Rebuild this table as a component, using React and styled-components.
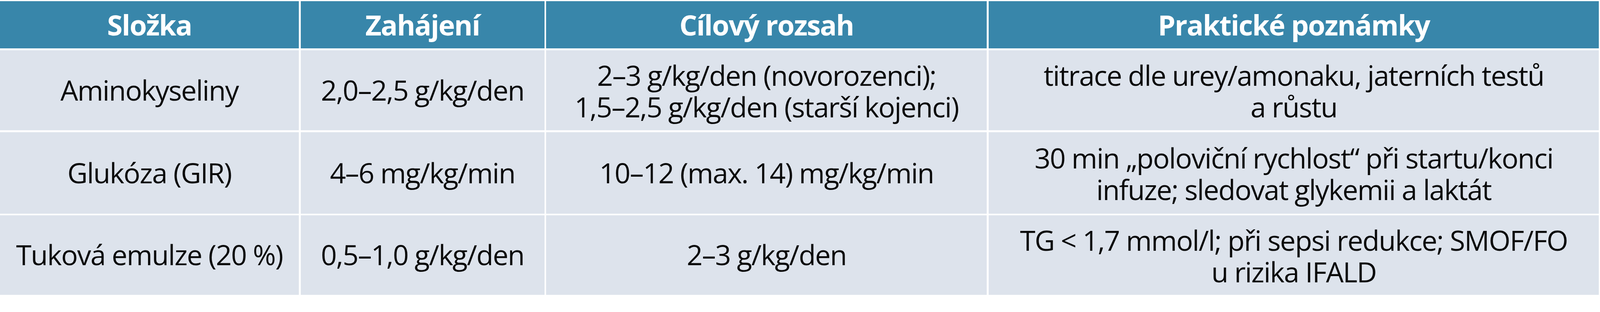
import styled, { createGlobalStyle } from 'styled-components'

// the reference is measured on a 4353px wide frame; sizes are kept in vw so the
// table scales with whatever width the window really has
const u = (px) => `${((px * 100) / 4353).toFixed(4)}vw`

const GlobalStyle = createGlobalStyle`
  html, body {
    margin: 0;
    padding: 0;
    background: #ffffff;
    overflow: hidden;
  }
  body {
    font-family: 'Open Sans', 'Noto Sans', sans-serif;
  }
`

const Table = styled.div`
  display: grid;
  grid-template-columns: ${u(813)} ${u(663)} ${u(1199)} ${u(1660)};
  grid-template-rows: ${u(129)} ${u(218)} ${u(222)} ${u(216)};
  column-gap: ${u(5)};
  row-gap: ${u(5)};
  padding: ${u(3)} ${u(3)} 0 0;
  width: 100vw;
  box-sizing: border-box;
  background: #ffffff;
`

const HeadCell = styled.div`
  display: flex;
  align-items: center;
  justify-content: center;
  background: #3886aa;
  color: #ffffff;
  font-weight: 700;
  font-size: ${u(76)};
  letter-spacing: ${u(-2)};
  white-space: nowrap;
`

const Cell = styled.div`
  display: flex;
  align-items: center;
  justify-content: center;
  text-align: center;
  background: #dde3ec;
  color: #0a0a0a;
  font-size: ${u(76)};
  line-height: ${u(86)};
  letter-spacing: ${u(-2)};
  white-space: nowrap;
  padding-top: ${(p) => (p.$lines > 1 ? u(6) : '0')};
`

const headers = ['Složka', 'Zahájení', 'Cílový rozsah', 'Praktické poznámky']

const rows = [
  [
    ['Aminokyseliny'],
    ['2,0–2,5 g/kg/den'],
    ['2–3 g/kg/den (novorozenci);', '1,5–2,5 g/kg/den (starší kojenci)'],
    ['titrace dle urey/amonaku, jaterních testů', 'a růstu'],
  ],
  [
    ['Glukóza (GIR)'],
    ['4–6 mg/kg/min'],
    ['10–12 (max. 14) mg/kg/min'],
    ['30 min „poloviční rychlost“ při startu/konci', 'infuze; sledovat glykemii a laktát'],
  ],
  [
    ['Tuková emulze (20 %)'],
    ['0,5–1,0 g/kg/den'],
    ['2–3 g/kg/den'],
    ['TG < 1,7 mmol/l; při sepsi redukce; SMOF/FO', 'u rizika IFALD'],
  ],
]

export default function App() {
  return (
    <>
      <GlobalStyle />
      <Table>
        {headers.map((h) => (
          <HeadCell key={h}>{h}</HeadCell>
        ))}
        {rows.map((row, r) =>
          row.map((lines, c) => (
            <Cell key={`${r}-${c}`} $lines={lines.length}>
              <div>
                {lines.map((line, i) => (
                  <div key={i}>{line}</div>
                ))}
              </div>
            </Cell>
          ))
        )}
      </Table>
    </>
  )
}
